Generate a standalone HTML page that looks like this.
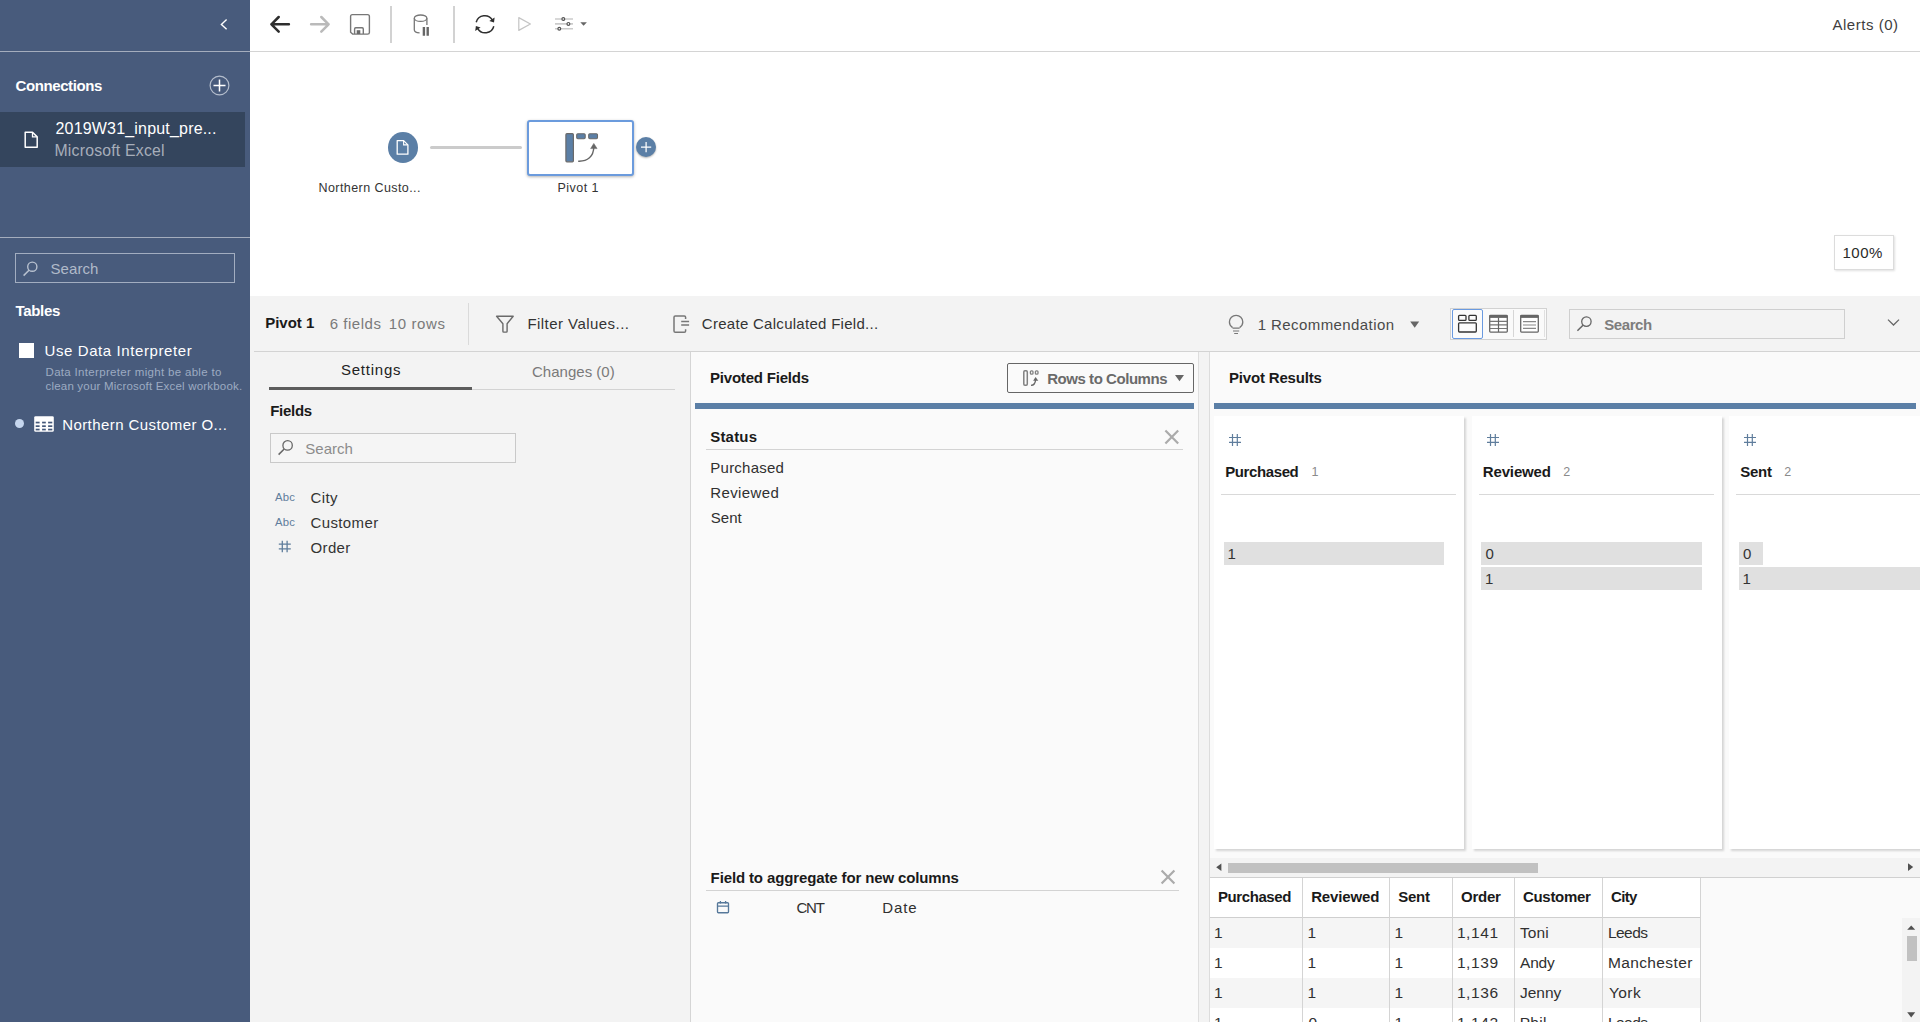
<!DOCTYPE html>
<html><head><meta charset="utf-8"><title>Tableau Prep</title>
<style>
html,body{margin:0;padding:0}
body{width:1920px;height:1022px;overflow:hidden;position:relative;background:#fff;font-family:"Liberation Sans",sans-serif}
.t{position:absolute;line-height:30px;height:30px;white-space:nowrap}
.a{position:absolute}
svg{position:absolute;overflow:visible}
.card{top:416px;width:250px;height:433px;background:#fff;box-shadow:1.5px 1.5px 2px rgba(0,0,0,.15)}
.hash{stroke:#5f7d9c;stroke-width:1.2;fill:none}
.bar{position:absolute;height:23px;background:#e0e0e0}
.hl{position:absolute;height:1px;background:#d9d9d9}
.vl{position:absolute;width:1px;background:#d4d4d4}

</style></head>
<body>
<!-- ===== sidebar ===== -->
<div class="a" style="left:0;top:0;width:250px;height:1022px;background:#485b7c"></div>
<div class="a" style="left:0;top:51px;width:250px;height:1px;background:#a4adbd"></div>
<div class="a" style="left:0;top:237px;width:250px;height:1px;background:#a4adbd"></div>
<div class="a" style="left:0;top:112px;width:245px;height:55px;background:#34455d"></div>
<!-- collapse chevron -->
<svg style="left:216px;top:16px" width="16" height="16" viewBox="0 0 16 16"><path d="M10.6 3.6 L5.4 8.4 L10.6 13.2" fill="none" stroke="#fff" stroke-width="1.4"/></svg>
<!-- add connection -->
<svg style="left:208px;top:74px" width="24" height="24" viewBox="0 0 24 24"><circle cx="11.5" cy="11.5" r="9.4" fill="none" stroke="#b4bdcc" stroke-width="1.2"/><path d="M5.5 11.5H17.5M11.5 5.5V17.5" stroke="#fff" stroke-width="1.5" fill="none"/></svg>
<!-- file icon -->
<svg style="left:22px;top:129px" width="20" height="22" viewBox="0 0 20 22"><path d="M3.2 3.2 H10.5 L15.2 7.9 V18.2 H3.2 Z" fill="none" stroke="#fff" stroke-width="1.5" stroke-linejoin="round"/><path d="M10.5 3.4 V7.9 H15" fill="none" stroke="#fff" stroke-width="1.3"/></svg>
<!-- search box -->
<div class="a" style="left:15px;top:253px;width:218px;height:28px;border:1px solid #a2adc0"></div>
<svg style="left:21px;top:259px" width="20" height="20" viewBox="0 0 20 20"><circle cx="11.3" cy="7.7" r="4.6" fill="none" stroke="#b8c1cf" stroke-width="1.4"/><path d="M8 11.2 L2.6 16.6" stroke="#b8c1cf" stroke-width="1.5" fill="none"/></svg>
<!-- checkbox -->
<div class="a" style="left:19px;top:343px;width:15px;height:15px;background:#fff"></div>
<!-- bullet + table icon -->
<div class="a" style="left:15px;top:419px;width:9px;height:9px;border-radius:50%;background:#c6d6ee"></div>
<svg style="left:34px;top:416px" width="20" height="16" viewBox="0 0 20 16"><rect x="0.2" y="0.2" width="19.6" height="15.6" rx="1.4" fill="#fff"/><rect x="1.7" y="5.7" width="3.9" height="1.7" fill="#44587a"/><rect x="8.1" y="5.7" width="3.7" height="1.7" fill="#44587a"/><rect x="14.1" y="5.7" width="4.2" height="1.7" fill="#44587a"/><rect x="1.7" y="9.3" width="3.9" height="1.7" fill="#44587a"/><rect x="8.1" y="9.3" width="3.7" height="1.7" fill="#44587a"/><rect x="14.1" y="9.3" width="4.2" height="1.7" fill="#44587a"/><rect x="1.7" y="12.7" width="3.9" height="1.7" fill="#44587a"/><rect x="8.1" y="12.7" width="3.7" height="1.7" fill="#44587a"/><rect x="14.1" y="12.7" width="4.2" height="1.7" fill="#44587a"/></svg>

<!-- ===== top toolbar ===== -->
<div class="a" style="left:250px;top:51px;width:1670px;height:1px;background:#d4d4d4"></div>
<!-- back -->
<svg style="left:268px;top:12px" width="24" height="24" viewBox="0 0 24 24"><path d="M20.9 12.3H3.4M10.7 5L3.4 12.3L10.7 19.6" fill="none" stroke="#2e2e2e" stroke-width="2.5" stroke-linecap="round" stroke-linejoin="round"/></svg>
<!-- forward -->
<svg style="left:308px;top:12px" width="24" height="24" viewBox="0 0 24 24"><path d="M3.1 12.3H20.6M13.3 5L20.6 12.3L13.3 19.6" fill="none" stroke="#bababa" stroke-width="2.5" stroke-linecap="round" stroke-linejoin="round"/></svg>
<!-- save -->
<svg style="left:348px;top:12px" width="24" height="24" viewBox="0 0 24 24"><path d="M4.4 2.6H19.6Q21.4 2.6 21.4 4.4V20.4Q21.4 22.1 19.6 22.1H4.6L2.6 20.2V4.4Q2.6 2.6 4.4 2.6Z" fill="none" stroke="#777" stroke-width="1.4"/><path d="M6.6 22V16.9Q6.6 15.8 7.7 15.8H14.2Q15.3 15.8 15.3 16.9V22" fill="none" stroke="#777" stroke-width="1.4"/><rect x="8.7" y="18.2" width="3.6" height="3.8" fill="#6a6a6a"/></svg>
<div class="a" style="left:390px;top:6px;width:2px;height:37px;background:#d2d2d2"></div>
<!-- db pause -->
<svg style="left:410px;top:12px" width="24" height="26" viewBox="0 0 24 26"><ellipse cx="10.6" cy="6.2" rx="6.3" ry="3.2" fill="none" stroke="#777" stroke-width="1.3"/><path d="M4.3 6.2V17.8C4.3 19.6 7 20.8 9.6 20.9M16.9 6.2V13" fill="none" stroke="#777" stroke-width="1.3"/><path d="M13.9 15V23.7M17.7 15V23.7" stroke="#666" stroke-width="2.4"/></svg>
<div class="a" style="left:453px;top:6px;width:2px;height:37px;background:#d2d2d2"></div>
<!-- refresh -->
<svg style="left:472px;top:12px" width="26" height="26" viewBox="0 0 26 26"><path d="M4.2 10.2A8.8 8.8 0 0 1 20.4 8.2" fill="none" stroke="#2e2e2e" stroke-width="1.5"/><path d="M21.8 14.2A8.8 8.8 0 0 1 5.6 16.3" fill="none" stroke="#2e2e2e" stroke-width="1.5"/><path d="M22.6 5.6L22 10.6L17.3 9Z" fill="#2e2e2e"/><path d="M3.2 19L3.9 14L8.6 15.6Z" fill="#2e2e2e"/></svg>
<!-- play -->
<svg style="left:514px;top:12px" width="24" height="24" viewBox="0 0 24 24"><path d="M4.8 5.6L16.4 12L4.8 18.4Z" fill="none" stroke="#c4c4c4" stroke-width="1.2" stroke-linejoin="round"/></svg>
<!-- sliders -->
<svg style="left:553px;top:14px" width="36" height="20" viewBox="0 0 36 20"><path d="M2 5H20M2 9.9H20M2 14.8H20" stroke="#cbcbcb" stroke-width="1.6"/><circle cx="10.3" cy="5" r="1.4" fill="#fff" stroke="#555" stroke-width="1.2"/><circle cx="15.4" cy="9.9" r="1.4" fill="#fff" stroke="#555" stroke-width="1.2"/><circle cx="6.3" cy="14.8" r="1.4" fill="#fff" stroke="#555" stroke-width="1.2"/><path d="M27.3 8.2H33.9L30.6 11.8Z" fill="#666"/></svg>

<!-- ===== flow canvas ===== -->
<div class="a" style="left:387.5px;top:132px;width:30.5px;height:31px;border-radius:50%;background:#5b7fa6"></div>
<svg style="left:394px;top:138px" width="18" height="20" viewBox="0 0 18 20"><path d="M3.2 2.6H9.6L13.9 6.9V16.2H3.2Z" fill="none" stroke="#fff" stroke-width="1.3" stroke-linejoin="round"/><path d="M9.6 2.8V6.9H13.7" fill="none" stroke="#fff" stroke-width="1.1"/></svg>
<div class="a" style="left:430px;top:146px;width:92px;height:3px;background:#cbcbcb;border-radius:1.5px"></div>
<div class="a" style="left:527px;top:120px;width:103px;height:51.7px;border:2px solid #6b9bdd;border-radius:3px;background:#fff;box-shadow:0 1px 3px rgba(0,0,0,.3)"></div>
<!-- pivot icon -->
<svg style="left:562px;top:130px" width="40" height="34" viewBox="0 0 40 34"><rect x="3.9" y="3.7" width="7.5" height="28.1" rx="1" fill="#5b7fa6" stroke="#6a6a6a" stroke-width="1.2"/><rect x="14.7" y="3.7" width="8.5" height="5" rx="1.1" fill="#5b7fa6" stroke="#6a6a6a" stroke-width="1.1"/><rect x="26.7" y="3.7" width="8.8" height="5" rx="1.1" fill="#5b7fa6" stroke="#6a6a6a" stroke-width="1.1"/><path d="M16.2 31.2C25.6 31.6 31.6 26.6 31.8 17" fill="none" stroke="#666" stroke-width="1.4"/><path d="M31.8 13.4L35.1 18.6H28.6Z" fill="#666" stroke="#666" stroke-width="0.5" stroke-linejoin="round"/></svg>
<div class="a" style="left:636px;top:137px;width:20px;height:20px;border-radius:50%;background:#5b7fa6;box-shadow:0 1px 2px rgba(0,0,0,.3)"></div>
<svg style="left:636px;top:137px" width="20" height="20" viewBox="0 0 20 20"><path d="M5 10.1H15.2M10.1 5V15.2" stroke="#fff" stroke-width="1.25"/></svg>
<div class="a" style="left:1834px;top:235px;width:58px;height:33px;border:1px solid #dcdcdc;background:#fff;box-shadow:1px 1px 2px rgba(0,0,0,.12)"></div>

<!-- ===== bottom pane ===== -->
<div class="a" style="left:250px;top:296px;width:1670px;height:726px;background:#f3f3f3"></div>
<div class="a" style="left:254px;top:351px;width:1666px;height:1px;background:#d3d3d3"></div>
<div class="a" style="left:468px;top:303px;width:1px;height:42px;background:#dadada"></div>
<!-- funnel -->
<svg style="left:494px;top:313px" width="22" height="22" viewBox="0 0 22 22"><path d="M2.6 3.3H19.2L13.1 10.7V18.3Q13.1 19.1 12.3 19.1H9.7Q8.9 19.1 8.9 18.3V10.7Z" fill="none" stroke="#6a6a6a" stroke-width="1.4" stroke-linejoin="round"/></svg>
<!-- calc field icon -->
<svg style="left:671px;top:313px" width="22" height="22" viewBox="0 0 22 22"><path d="M14.6 6V4.3C14.6 3.5 14.1 3 13.3 3H4.3C3.5 3 3 3.5 3 4.3V18C3 18.8 3.5 19.3 4.3 19.3H13.3C14.1 19.3 14.6 18.8 14.6 18V16.2" fill="none" stroke="#777" stroke-width="1.5"/><path d="M10.2 8.5H18.1M10.2 12H18.1" stroke="#777" stroke-width="1.4"/></svg>
<!-- bulb -->
<svg style="left:1226px;top:313px" width="22" height="24" viewBox="0 0 22 24"><path d="M6.6 14.6C4.6 13.2 3.4 11.3 3.4 9A6.7 6.7 0 0 1 16.8 9C16.8 11.3 15.6 13.2 13.6 14.6" fill="none" stroke="#777" stroke-width="1.3"/><path d="M6.6 15.2H13.6M7 18H13.2M8.2 20.5H12" stroke="#777" stroke-width="1.2"/></svg>
<svg style="left:1408px;top:318px" width="14" height="14" viewBox="0 0 14 14"><path d="M2.2 3.6H11.2L6.7 9.8Z" fill="#666"/></svg>
<!-- view toggle -->
<div class="a" style="left:1450px;top:308px;width:95px;height:30px;border:1px solid #d2d2d2;background:#fafafa"></div>
<div class="a" style="left:1452px;top:309px;width:29px;height:28px;border:1px solid #6a9ae0;border-radius:2px;background:#fbfbfb"></div>
<svg style="left:1456px;top:313px" width="24" height="22" viewBox="0 0 24 22"><rect x="2.6" y="2.4" width="7.4" height="4.9" rx="0.9" fill="none" stroke="#333" stroke-width="1.3"/><rect x="12.9" y="2.4" width="7.4" height="4.9" rx="0.9" fill="none" stroke="#333" stroke-width="1.3"/><rect x="2.6" y="9.9" width="17.7" height="9.1" rx="0.9" fill="none" stroke="#333" stroke-width="1.3"/></svg>
<svg style="left:1487px;top:313px" width="24" height="22" viewBox="0 0 24 22"><rect x="2.7" y="2.3" width="17.6" height="16.8" rx="0.8" fill="#fff" stroke="#666" stroke-width="1.3"/><rect x="2.7" y="2.3" width="17.6" height="2.6" fill="#666"/><path d="M2.7 8.4H20.3M2.7 11.9H20.3M2.7 15.5H20.3" stroke="#777" stroke-width="1.2"/><path d="M11.5 4.6V19" stroke="#666" stroke-width="1.2"/></svg>
<div class="a" style="left:1513px;top:310px;width:1px;height:27px;background:#d6d6d6"></div><div class="a" style="left:1544px;top:310px;width:1px;height:27px;background:#e0e0e0"></div>
<svg style="left:1518px;top:313px" width="24" height="22" viewBox="0 0 24 22"><rect x="2.7" y="2.3" width="17.6" height="16.8" rx="0.8" fill="#fff" stroke="#666" stroke-width="1.3"/><rect x="2.7" y="2.3" width="17.6" height="2.6" fill="#666"/><path d="M5 8.6H18M5 12H18M5 15.4H18" stroke="#888" stroke-width="1.1"/></svg>
<!-- search right -->
<div class="a" style="left:1569px;top:309px;width:274px;height:28px;border:1px solid #cfcfcf;background:#f3f3f3"></div>
<svg style="left:1575px;top:314px" width="20" height="20" viewBox="0 0 20 20"><circle cx="11.4" cy="7.6" r="4.7" fill="none" stroke="#666" stroke-width="1.3"/><path d="M8 11.2L2.4 16.8" stroke="#666" stroke-width="1.5"/></svg>
<svg style="left:1885px;top:315px" width="16" height="14" viewBox="0 0 16 14"><path d="M3 4.6L8.5 10L14 4.6" fill="none" stroke="#666" stroke-width="1.3"/></svg>

<!-- settings pane -->
<div class="a" style="left:269px;top:387px;width:203px;height:3px;background:#5c5c5c"></div>
<div class="a" style="left:472px;top:389px;width:203px;height:1px;background:#d3d3d3"></div>
<div class="a" style="left:270px;top:433px;width:244px;height:28px;border:1px solid #c9c9c9;background:#f5f5f5"></div>
<svg style="left:276px;top:438px" width="20" height="20" viewBox="0 0 20 20"><circle cx="11.6" cy="7.4" r="4.7" fill="none" stroke="#666" stroke-width="1.3"/><path d="M8.2 11L2.6 16.6" stroke="#666" stroke-width="1.5"/></svg>
<svg style="left:277px;top:539px" width="16" height="16" viewBox="0 0 16 16"><path d="M5.3 1.8V13.2M10.1 1.8V13.2M1.8 5.2H13.8M1.8 9.9H13.8" stroke="#5f7d9c" stroke-width="1.3"/></svg>

<!-- pivoted fields pane -->
<div class="a" style="left:690px;top:352px;width:507px;height:670px;background:#fafafa;border-left:1px solid #d5d5d5;border-right:1px solid #dedede"></div>
<div class="a" style="left:1007px;top:363px;width:185px;height:28px;border:1px solid #666;border-radius:2px"></div>
<svg style="left:1021px;top:368px" width="20" height="20" viewBox="0 0 20 20"><rect x="2.8" y="2.8" width="3.5" height="14.4" rx="1.1" fill="none" stroke="#808080" stroke-width="1.5"/><rect x="9.4" y="2.8" width="2.6" height="3.4" rx="1" fill="none" stroke="#808080" stroke-width="1.3"/><rect x="14.4" y="2.8" width="2.6" height="3.4" rx="1" fill="none" stroke="#808080" stroke-width="1.3"/><path d="M10 17.4C12.8 17.2 14.4 15 14.6 11.6" fill="none" stroke="#666" stroke-width="1.3"/><path d="M14.6 8.9L17.3 12.7H12.1Z" fill="#666"/></svg>
<svg style="left:1173px;top:372px" width="14" height="12" viewBox="0 0 14 12"><path d="M2 3H11L6.5 9.2Z" fill="#666"/></svg>
<div class="a" style="left:695px;top:403px;width:499px;height:6px;background:#5b7fa6"></div>
<div class="a" style="left:706px;top:449px;width:477px;height:1px;background:#d3d3d3"></div>
<svg style="left:1163px;top:428px" width="18" height="18" viewBox="0 0 18 18"><path d="M2.4 2.4L15.2 15.4M15.2 2.4L2.4 15.4" stroke="#ababab" stroke-width="2.2"/></svg>
<div class="a" style="left:706px;top:890px;width:473px;height:1px;background:#d3d3d3"></div>
<svg style="left:1159px;top:868px" width="18" height="18" viewBox="0 0 18 18"><path d="M2.6 2.4L15.4 15.4M15.4 2.4L2.6 15.4" stroke="#ababab" stroke-width="2.2"/></svg>
<svg style="left:715px;top:899px" width="16" height="16" viewBox="0 0 16 16"><rect x="2.5" y="3.7" width="11" height="10" rx="0.9" fill="none" stroke="#56789a" stroke-width="1.35"/><path d="M2.5 7.1H13.5M5.4 2V4.4M10.6 2V4.4" stroke="#56789a" stroke-width="1.3"/></svg>

<!-- pivot results pane -->
<div class="a" style="left:1209px;top:352px;width:711px;height:670px;background:#fafafa;border-left:1px solid #dcdcdc;box-sizing:border-box"></div>
<div class="a" style="left:1214px;top:403px;width:702px;height:6px;background:#5b7fa6"></div>
<div class="a card" style="left:1214px"></div>
<div class="a card" style="left:1471.5px"></div>
<div class="a card" style="left:1729px"></div>
<svg style="left:1227px;top:432px" width="16" height="16" viewBox="0 0 16 16"><path class="hash" d="M5.5 2V14M10.3 2V14M2 5.5H14M2 10.3H14"/></svg>
<div class="hl" style="left:1221px;top:494px;width:235px"></div>
<svg style="left:1484.5px;top:432px" width="16" height="16" viewBox="0 0 16 16"><path class="hash" d="M5.5 2V14M10.3 2V14M2 5.5H14M2 10.3H14"/></svg>
<div class="hl" style="left:1478.5px;top:494px;width:235px"></div>
<svg style="left:1742px;top:432px" width="16" height="16" viewBox="0 0 16 16"><path class="hash" d="M5.5 2V14M10.3 2V14M2 5.5H14M2 10.3H14"/></svg>
<div class="hl" style="left:1736px;top:494px;width:235px"></div>
<div class="bar" style="left:1224px;top:542px;width:220px"></div>
<div class="bar" style="left:1481px;top:542px;width:221px"></div>
<div class="bar" style="left:1481px;top:567px;width:221px"></div>
<div class="bar" style="left:1739px;top:542px;width:24px"></div>
<div class="bar" style="left:1739px;top:567px;width:190px"></div>
<div class="a" style="left:1210px;top:858px;width:710px;height:19px;background:#f3f3f3"></div>
<div class="a" style="left:1228px;top:863px;width:310px;height:10px;background:#c1c1c1"></div>
<svg style="left:1214px;top:861px" width="10" height="12" viewBox="0 0 10 12"><path d="M7.4 2.4V10L2.2 6.2Z" fill="#505050"/></svg>
<svg style="left:1905px;top:861px" width="10" height="12" viewBox="0 0 10 12"><path d="M3 2.2V10L8.2 6.1Z" fill="#505050"/></svg>
<div class="a" style="left:1210px;top:877px;width:710px;height:1px;background:#d0d0d0"></div>
<div class="a" style="left:1210px;top:878px;width:490px;height:39px;background:#fff"></div>
<div class="a" style="left:1210px;top:917px;width:490px;height:1px;background:#cfcfcf"></div>
<div class="a" style="left:1210px;top:918px;width:490px;height:30px;background:#f5f5f5"></div>
<div class="a" style="left:1210px;top:948px;width:490px;height:30px;background:#fff"></div>
<div class="a" style="left:1210px;top:978px;width:490px;height:30px;background:#f5f5f5"></div>
<div class="a" style="left:1210px;top:1008px;width:490px;height:14px;background:#fff"></div>
<div class="vl" style="left:1302px;top:878px;height:144px"></div>
<div class="vl" style="left:1389px;top:878px;height:144px"></div>
<div class="vl" style="left:1452px;top:878px;height:144px"></div>
<div class="vl" style="left:1514px;top:878px;height:144px"></div>
<div class="vl" style="left:1602px;top:878px;height:144px"></div>
<div class="vl" style="left:1700px;top:878px;height:144px"></div>
<div class="a" style="left:1902px;top:918px;width:18px;height:104px;background:#f3f3f3"></div>
<div class="a" style="left:1907px;top:936px;width:10px;height:25px;background:#c1c1c1"></div>
<svg style="left:1905px;top:923px" width="14" height="10" viewBox="0 0 14 10"><path d="M2.2 6.8H10.2L6.2 2.4Z" fill="#505050"/></svg>
<svg style="left:1905px;top:1009px" width="14" height="10" viewBox="0 0 14 10"><path d="M2.2 3.2H10.2L6.2 8.6Z" fill="#505050"/></svg>

<!-- text layer -->
<span class="t" style="left:15.50px;top:70.67px;font-size:15px;font-weight:700;color:#ffffff;letter-spacing:-0.399px">Connections</span>
<span class="t" style="left:55.50px;top:113.58px;font-size:16px;font-weight:400;color:#ffffff;letter-spacing:0.184px">2019W31_input_pre...</span>
<span class="t" style="left:54.50px;top:135.58px;font-size:15.8px;font-weight:400;color:#a7aeba;letter-spacing:0.208px">Microsoft Excel</span>
<span class="t" style="left:50.50px;top:253.67px;font-size:15px;font-weight:400;color:#b0bac9;letter-spacing:0.063px">Search</span>
<span class="t" style="left:15.50px;top:295.67px;font-size:15px;font-weight:700;color:#ffffff;letter-spacing:-0.313px">Tables</span>
<span class="t" style="left:44.50px;top:335.67px;font-size:15px;font-weight:400;color:#ffffff;letter-spacing:0.595px">Use Data Interpreter</span>
<span class="t" style="left:45.50px;top:357.13px;font-size:11.5px;font-weight:400;color:#9dabc2;letter-spacing:0.323px">Data Interpreter might be able to</span>
<span class="t" style="left:45.50px;top:371.13px;font-size:11.5px;font-weight:400;color:#9dabc2;letter-spacing:0.196px">clean your Microsoft Excel workbook.</span>
<span class="t" style="left:62.20px;top:409.67px;font-size:15px;font-weight:400;color:#ffffff;letter-spacing:0.418px">Northern Customer O...</span>
<span class="t" style="left:1832.50px;top:10.17px;font-size:15px;font-weight:400;color:#3e3e3e;letter-spacing:0.517px">Alerts (0)</span>
<span class="t" style="left:1842.50px;top:237.67px;font-size:15px;font-weight:400;color:#2a2a2a;letter-spacing:0.491px">100%</span>
<span class="t" style="left:318.50px;top:172.64px;font-size:12.5px;font-weight:400;color:#333333;letter-spacing:0.425px">Northern Custo...</span>
<span class="t" style="left:557.50px;top:172.64px;font-size:12.5px;font-weight:400;color:#333333;letter-spacing:0.456px">Pivot 1</span>
<span class="t" style="left:265.20px;top:308.17px;font-size:15px;font-weight:700;color:#1a1a1a;letter-spacing:-0.023px">Pivot 1</span>
<span class="t" style="left:329.70px;top:308.67px;font-size:15px;font-weight:400;color:#7a7a7a;letter-spacing:0.539px">6 fields</span>
<span class="t" style="left:388.70px;top:308.67px;font-size:15px;font-weight:400;color:#7a7a7a;letter-spacing:0.630px">10 rows</span>
<span class="t" style="left:527.40px;top:308.67px;font-size:15px;font-weight:400;color:#333333;letter-spacing:0.454px">Filter Values...</span>
<span class="t" style="left:701.80px;top:308.67px;font-size:15px;font-weight:400;color:#333333;letter-spacing:0.285px">Create Calculated Field...</span>
<span class="t" style="left:1257.70px;top:309.67px;font-size:15px;font-weight:400;color:#4a4a4a;letter-spacing:0.418px">1 Recommendation</span>
<span class="t" style="left:1604.20px;top:309.67px;font-size:15px;font-weight:700;color:#7d7d7d;letter-spacing:-0.414px">Search</span>
<span class="t" style="left:341.00px;top:355.17px;font-size:15px;font-weight:400;color:#222222;letter-spacing:0.757px">Settings</span>
<span class="t" style="left:532.00px;top:356.67px;font-size:15px;font-weight:400;color:#7a7a7a;letter-spacing:0.015px">Changes (0)</span>
<span class="t" style="left:270.20px;top:395.87px;font-size:15px;font-weight:700;color:#1a1a1a;letter-spacing:-0.280px">Fields</span>
<span class="t" style="left:305.30px;top:433.67px;font-size:15px;font-weight:400;color:#8c8c8c;letter-spacing:0.023px">Search</span>
<span class="t" style="left:275.00px;top:482.33px;font-size:11.3px;font-weight:400;color:#5f7d9c;letter-spacing:0.191px">Abc</span>
<span class="t" style="left:275.00px;top:507.33px;font-size:11.3px;font-weight:400;color:#5f7d9c;letter-spacing:0.191px">Abc</span>
<span class="t" style="left:310.50px;top:482.77px;font-size:15px;font-weight:400;color:#333333;letter-spacing:0.356px">City</span>
<span class="t" style="left:310.50px;top:507.77px;font-size:15px;font-weight:400;color:#333333;letter-spacing:0.383px">Customer</span>
<span class="t" style="left:310.50px;top:532.77px;font-size:15px;font-weight:400;color:#333333;letter-spacing:0.363px">Order</span>
<span class="t" style="left:710.00px;top:363.17px;font-size:15px;font-weight:700;color:#1a1a1a;letter-spacing:-0.204px">Pivoted Fields</span>
<span class="t" style="left:1047.20px;top:363.67px;font-size:15px;font-weight:700;color:#6a6a6a;letter-spacing:-0.452px">Rows to Columns</span>
<span class="t" style="left:710.20px;top:422.17px;font-size:15px;font-weight:700;color:#1a1a1a;letter-spacing:0.200px">Status</span>
<span class="t" style="left:710.30px;top:452.87px;font-size:15px;font-weight:400;color:#303030;letter-spacing:0.241px">Purchased</span>
<span class="t" style="left:710.30px;top:477.87px;font-size:15px;font-weight:400;color:#303030;letter-spacing:0.368px">Reviewed</span>
<span class="t" style="left:710.80px;top:502.87px;font-size:15px;font-weight:400;color:#303030;letter-spacing:0.037px">Sent</span>
<span class="t" style="left:710.60px;top:862.67px;font-size:15px;font-weight:700;color:#1a1a1a;letter-spacing:-0.127px">Field to aggregate for new columns</span>
<span class="t" style="left:796.40px;top:893.17px;font-size:15px;font-weight:400;color:#303030;letter-spacing:-1.200px">CNT</span>
<span class="t" style="left:882.30px;top:893.17px;font-size:15px;font-weight:400;color:#303030;letter-spacing:0.853px">Date</span>
<span class="t" style="left:1229.00px;top:363.17px;font-size:15px;font-weight:700;color:#1a1a1a;letter-spacing:-0.174px">Pivot Results</span>
<span class="t" style="left:1225.20px;top:456.67px;font-size:15px;font-weight:700;color:#1a1a1a;letter-spacing:-0.392px">Purchased</span>
<span class="t" style="left:1311.50px;top:456.64px;font-size:12.5px;font-weight:400;color:#8a8a8a;letter-spacing:0.000px">1</span>
<span class="t" style="left:1482.80px;top:456.67px;font-size:15px;font-weight:700;color:#1a1a1a;letter-spacing:-0.148px">Reviewed</span>
<span class="t" style="left:1563.20px;top:456.64px;font-size:12.5px;font-weight:400;color:#8a8a8a;letter-spacing:0.000px">2</span>
<span class="t" style="left:1740.20px;top:456.67px;font-size:15px;font-weight:700;color:#1a1a1a;letter-spacing:-0.237px">Sent</span>
<span class="t" style="left:1784.20px;top:456.64px;font-size:12.5px;font-weight:400;color:#8a8a8a;letter-spacing:0.000px">2</span>
<span class="t" style="left:1227.50px;top:539.17px;font-size:15px;font-weight:400;color:#333333;letter-spacing:0.000px">1</span>
<span class="t" style="left:1485.50px;top:539.17px;font-size:15px;font-weight:400;color:#333333;letter-spacing:0.000px">0</span>
<span class="t" style="left:1485.00px;top:564.17px;font-size:15px;font-weight:400;color:#333333;letter-spacing:0.000px">1</span>
<span class="t" style="left:1743.00px;top:539.17px;font-size:15px;font-weight:400;color:#333333;letter-spacing:0.000px">0</span>
<span class="t" style="left:1742.50px;top:564.17px;font-size:15px;font-weight:400;color:#333333;letter-spacing:0.000px">1</span>
<span class="t" style="left:1218.00px;top:882.17px;font-size:15px;font-weight:700;color:#1a1a1a;letter-spacing:-0.417px">Purchased</span>
<span class="t" style="left:1311.20px;top:882.17px;font-size:15px;font-weight:700;color:#1a1a1a;letter-spacing:-0.148px">Reviewed</span>
<span class="t" style="left:1398.20px;top:882.17px;font-size:15px;font-weight:700;color:#1a1a1a;letter-spacing:-0.237px">Sent</span>
<span class="t" style="left:1461.00px;top:882.17px;font-size:15px;font-weight:700;color:#1a1a1a;letter-spacing:-0.252px">Order</span>
<span class="t" style="left:1523.00px;top:882.17px;font-size:15px;font-weight:700;color:#1a1a1a;letter-spacing:-0.311px">Customer</span>
<span class="t" style="left:1611.00px;top:882.17px;font-size:15px;font-weight:700;color:#1a1a1a;letter-spacing:-0.665px">City</span>
<span class="t" style="left:1214.00px;top:918.18px;font-size:15.5px;font-weight:400;color:#303030;letter-spacing:0.000px">1</span>
<span class="t" style="left:1307.60px;top:918.18px;font-size:15.5px;font-weight:400;color:#303030;letter-spacing:0.000px">1</span>
<span class="t" style="left:1394.50px;top:918.18px;font-size:15.5px;font-weight:400;color:#303030;letter-spacing:0.000px">1</span>
<span class="t" style="left:1456.90px;top:918.18px;font-size:15.5px;font-weight:400;color:#303030;letter-spacing:0.608px">1,141</span>
<span class="t" style="left:1520.00px;top:918.18px;font-size:15.5px;font-weight:400;color:#303030;letter-spacing:0.070px">Toni</span>
<span class="t" style="left:1607.90px;top:918.18px;font-size:15.5px;font-weight:400;color:#303030;letter-spacing:-0.520px">Leeds</span>
<span class="t" style="left:1214.00px;top:948.18px;font-size:15.5px;font-weight:400;color:#303030;letter-spacing:0.000px">1</span>
<span class="t" style="left:1307.60px;top:948.18px;font-size:15.5px;font-weight:400;color:#303030;letter-spacing:0.000px">1</span>
<span class="t" style="left:1394.50px;top:948.18px;font-size:15.5px;font-weight:400;color:#303030;letter-spacing:0.000px">1</span>
<span class="t" style="left:1456.90px;top:948.18px;font-size:15.5px;font-weight:400;color:#303030;letter-spacing:0.608px">1,139</span>
<span class="t" style="left:1520.00px;top:948.18px;font-size:15.5px;font-weight:400;color:#303030;letter-spacing:-0.193px">Andy</span>
<span class="t" style="left:1607.90px;top:948.18px;font-size:15.5px;font-weight:400;color:#303030;letter-spacing:0.387px">Manchester</span>
<span class="t" style="left:1214.00px;top:978.18px;font-size:15.5px;font-weight:400;color:#303030;letter-spacing:0.000px">1</span>
<span class="t" style="left:1307.60px;top:978.18px;font-size:15.5px;font-weight:400;color:#303030;letter-spacing:0.000px">1</span>
<span class="t" style="left:1394.50px;top:978.18px;font-size:15.5px;font-weight:400;color:#303030;letter-spacing:0.000px">1</span>
<span class="t" style="left:1456.90px;top:978.18px;font-size:15.5px;font-weight:400;color:#303030;letter-spacing:0.608px">1,136</span>
<span class="t" style="left:1520.00px;top:978.18px;font-size:15.5px;font-weight:400;color:#303030;letter-spacing:-0.028px">Jenny</span>
<span class="t" style="left:1608.90px;top:978.18px;font-size:15.5px;font-weight:400;color:#303030;letter-spacing:0.434px">York</span>
<span class="t" style="left:1214.00px;top:1008.18px;font-size:15.5px;font-weight:400;color:#303030;letter-spacing:0.000px">1</span>
<span class="t" style="left:1308.60px;top:1008.18px;font-size:15.5px;font-weight:400;color:#303030;letter-spacing:0.000px">0</span>
<span class="t" style="left:1394.50px;top:1008.18px;font-size:15.5px;font-weight:400;color:#303030;letter-spacing:0.000px">1</span>
<span class="t" style="left:1456.90px;top:1008.18px;font-size:15.5px;font-weight:400;color:#303030;letter-spacing:0.608px">1,142</span>
<span class="t" style="left:1519.80px;top:1008.18px;font-size:15.5px;font-weight:400;color:#303030;letter-spacing:0.233px">Phil</span>
<span class="t" style="left:1607.90px;top:1008.18px;font-size:15.5px;font-weight:400;color:#303030;letter-spacing:-0.520px">Leeds</span>
</body></html>
